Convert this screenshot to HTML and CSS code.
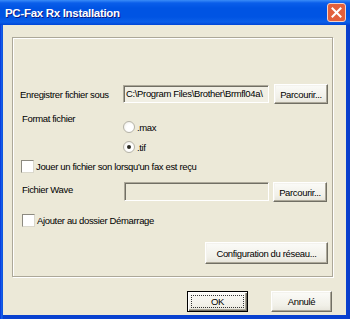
FILE: index.html
```html
<!DOCTYPE html>
<html lang="fr">
<head>
<meta charset="utf-8">
<title>PC-Fax Rx Installation</title>
<link rel="stylesheet" href="styles.css">
</head>
<body>
<div class="window">
  <div class="titlebar">
    <span class="title">PC-Fax Rx Installation</span>
    <span class="close">
      <svg width="19" height="19" viewBox="0 0 19 19">
        <rect x="0.5" y="0.5" width="18" height="18" rx="2.5" fill="#E2603C" stroke="#F4D2C6"/>
        <path d="M5.5 5.5 L13.5 13.5 M13.5 5.5 L5.5 13.5" stroke="#fff" stroke-width="2" stroke-linecap="square"/>
      </svg>
    </span>
  </div>
  <div class="frame">
    <div class="panel">
      <div class="row">
        <span class="label">Enregistrer fichier sous</span>
        <span class="field">C:\Program Files\Brother\Brmfl04a\</span>
        <span class="btn browse">Parcourir...</span>
      </div>
      <div class="format">
        <span class="label label-format">Format fichier</span>
        <div class="radios">
          <div class="radio"><span class="circle"></span><span>.max</span></div>
          <div class="radio"><span class="circle checked"></span><span>.tif</span></div>
        </div>
      </div>
      <div class="check check1"><span class="box"></span><span>Jouer un fichier son lorsqu'un fax est reçu</span></div>
      <div class="row wave">
        <span class="label label-wave">Fichier Wave</span>
        <span class="field field-wave"></span>
        <span class="btn browse">Parcourir...</span>
      </div>
      <div class="check check2"><span class="box"></span><span>Ajouter au dossier Démarrage</span></div>
      <span class="btn config">Configuration du réseau...</span>
    </div>
    <div class="actions">
      <span class="btn default"><span class="focus">OK</span></span>
      <span class="btn">Annulé</span>
    </div>
  </div>
</div>
</body>
</html>
```

FILE: styles.css
```css
html, body {
  margin: 0;
  padding: 0;
  width: 350px;
  height: 319px;
  overflow: hidden;
  background: #ECE9D8;
}
.window {
  width: 350px;
  height: 319px;
  display: flex;
  flex-direction: column;
  background: linear-gradient(90deg, #0831D9 0, #166AEE 2px, #0841D0 3px, #0841D0 346px, #0A3CC8 350px);
  font-family: "Liberation Sans", Arial, sans-serif;
  font-size: 9.5px;
  letter-spacing: -0.35px;
  color: #000;
}
.titlebar {
  height: 25px;
  flex: none;
  display: flex;
  align-items: center;
  justify-content: space-between;
  padding: 0 4px 0 5px;
  background: linear-gradient(#3A8CF8 0, #0A5EEA 3px, #0054E3 8px, #0054E3 17px, #0B5FE9 22px, #0046D6 25px);
}
.title {
  color: #fff;
  font-weight: bold;
  font-size: 11.5px;
  letter-spacing: -0.3px;
  text-shadow: 1px 1px 0 #0A1883;
}
.close {
  display: flex;
  width: 19px;
  height: 19px;
}
.frame {
  flex: 1;
  min-height: 0;
  display: flex;
  flex-direction: column;
  margin: 0 4px 4px 3px;
  padding: 12px 13px 3px 9px;
  background: #ECE9D8;
}
.panel {
  box-sizing: border-box;
  height: 240px;
  flex: none;
  display: flex;
  flex-direction: column;
  padding: 46px 4px 0 7px;
  border: 1px solid #ACA899;
  box-shadow: 1px 1px 0 #fff, inset 1px 1px 0 #fff;
}
.row {
  display: flex;
  align-items: center;
  height: 20px;
}
.label {
  width: 103px;
  flex: none;
  line-height: 13px;
}
.field {
  width: 142px;
  height: 16px;
  flex: none;
  padding: 0 0 0 2px;
  line-height: 16px;
  white-space: nowrap;
  overflow: hidden;
  background: #F1EFE4;
  border-style: solid;
  border-width: 1px;
  border-color: #ACA899 #fff #fff #ACA899;
  box-shadow: inset 1px 1px 0 #716F64;
}
.btn {
  display: flex;
  align-items: center;
  justify-content: center;
  box-sizing: border-box;
  background: linear-gradient(#FBFBF8, #F1F0E8 70%, #E6E4DA);
  border: 1px solid;
  border-color: #fff #716F64 #716F64 #fff;
  box-shadow: inset -1px -1px 0 #ACA899, inset 1px 1px 0 #F4F3EE;
}
.browse {
  width: 54px;
  height: 20px;
  margin-left: 5px;
}
.format {
  display: flex;
  margin-top: 8px;
}
.label-format {
  padding-left: 2px;
  width: 101px;
}
.radios {
  display: flex;
  flex-direction: column;
  gap: 6px;
  padding-top: 8px;
}
.radio {
  display: flex;
  align-items: center;
  height: 14px;
  gap: 2px;
}
.circle {
  width: 10px;
  height: 10px;
  border-radius: 50%;
  border: 1px solid #B5B3A8;
  background: radial-gradient(circle at 60% 60%, #fff 40%, #EAE8DF);
  display: flex;
  align-items: center;
  justify-content: center;
}
.circle.checked::after {
  content: "";
  width: 4px;
  height: 4px;
  border-radius: 50%;
  background: #2A2A22;
}
.check {
  display: flex;
  align-items: center;
  height: 14px;
  gap: 2px;
}
.box {
  width: 11px;
  height: 11px;
  background: #fff;
  border: 1px solid;
  border-color: #8C8A80 #DAD8CC #DAD8CC #8C8A80;
}
.check1 {
  margin-top: 5px;
  padding-left: 1px;
}
.wave {
  margin-top: 9px;
  align-items: flex-start;
}
.label-wave {
  padding: 1px 0 0 2px;
  width: 102px;
}
.field-wave {
  width: 141px;
  height: 17px;
  background: #ECE9D8;
}
.wave .browse {
  margin-left: 4px;
}
.check2 {
  margin-top: 11px;
  padding-left: 2px;
}
.config {
  align-self: flex-end;
  margin-top: 15px;
  width: 123px;
  height: 22px;
}
.actions {
  display: flex;
  justify-content: flex-end;
  gap: 23px;
  margin-top: 14px;
  padding-right: 1px;
}
.actions .btn {
  width: 61px;
  height: 21px;
}
.actions .btn.default {
  border: 1px solid #000;
  box-shadow: inset 1px 1px 0 #fff, inset -1px -1px 0 #716F64, inset -2px -2px 0 #ACA899;
  padding: 3px;
}
.focus {
  flex: 1;
  align-self: stretch;
  display: flex;
  align-items: center;
  justify-content: center;
  border: 1px dotted #333;
}
```
